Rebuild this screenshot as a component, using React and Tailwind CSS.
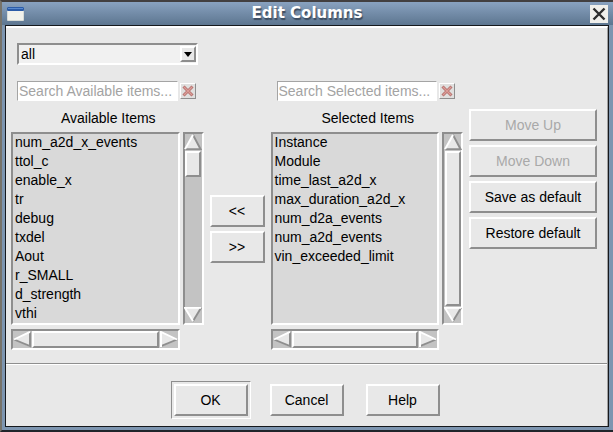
import React from "react";

const raised =
  "border-2 border-t-white border-l-white border-r-[#8e8e8e] border-b-[#8e8e8e] bg-[#e8e8e8]";
const sunken =
  "border-2 border-t-[#8e8e8e] border-l-[#8e8e8e] border-r-white border-b-white";

const available = [
  "num_a2d_x_events",
  "ttol_c",
  "enable_x",
  "tr",
  "debug",
  "txdel",
  "Aout",
  "r_SMALL",
  "d_strength",
  "vthi",
];

const selected = [
  "Instance",
  "Module",
  "time_last_a2d_x",
  "max_duration_a2d_x",
  "num_d2a_events",
  "num_a2d_events",
  "vin_exceeded_limit",
];

function Button({ children, className = "", disabled = false }) {
  return (
    <button
      type="button"
      disabled={disabled}
      className={`h-8 whitespace-nowrap disabled:text-[#a9a9a9] ${raised} ${className}`}
    >
      {children}
    </button>
  );
}

const arrows = {
  up: {
    face: "9,1 17,16 1,16",
    light: "M1 16 L9 1",
    dark: "M9 1 L16.5 16 H1",
  },
  down: {
    face: "1,1 17,1 9,16",
    light: "M17 2 H1 L9 16",
    dark: "M9 16 L17 2",
  },
  left: {
    face: "1,9 17,1 17,17",
    light: "M1 9 L17 1",
    dark: "M17 1 V16 L1 9",
  },
  right: {
    face: "1,1 17,9 1,17",
    light: "M1 17 V1 L17 9",
    dark: "M1 16 L17 9",
  },
};

function Arrow({ direction }) {
  const a = arrows[direction];
  return (
    <button type="button" aria-label={`Scroll ${direction}`} className="block shrink-0">
      <svg width="18" height="17" viewBox="0 0 18 18" preserveAspectRatio="none" className="block">
        <polygon points={a.face} fill="#e8e8e8" />
        <path d={a.dark} fill="none" stroke="#8e8e8e" strokeWidth="2" />
        <path d={a.light} fill="none" stroke="#fff" strokeWidth="2" />
      </svg>
    </button>
  );
}

function VerticalScrollbar({ full }) {
  return (
    <div className={`flex w-[21px] shrink-0 flex-col items-center bg-[#c3c3c3] ${sunken}`}>
      <Arrow direction="up" />
      <div className={`w-4 ${full ? "flex-1" : "h-[26px]"} ${raised}`} />
      {!full && <div className="flex-1" />}
      <Arrow direction="down" />
    </div>
  );
}

function HorizontalScrollbar() {
  return (
    <div className={`flex h-[21px] min-w-0 flex-1 items-center bg-[#c3c3c3] ${sunken}`}>
      <Arrow direction="left" />
      <div className={`mx-px h-[17px] flex-1 ${raised}`} />
      <Arrow direction="right" />
    </div>
  );
}

function ItemList({ label, placeholder, items, full }) {
  return (
    <section className="min-w-0 flex-1">
      <div className="flex items-center gap-0.5 pr-2 pl-[6px]">
        <input
          type="text"
          aria-label={placeholder}
          placeholder={placeholder}
          className="h-5 min-w-0 flex-1 border border-t-[#a4a4a4] border-l-[#a4a4a4] border-r-white border-b-white bg-white px-px outline-none placeholder:text-[#a3a3a3]"
        />
        <button
          type="button"
          aria-label="Clear search"
          className="flex size-4 items-center justify-center border border-t-white border-l-white border-r-[#8e8e8e] border-b-[#8e8e8e] bg-[#e0dfde]"
        >
          <svg width="12" height="12" viewBox="0 0 12 12">
            <path d="M1.5 1.5 L10.5 10.5 M10.5 1.5 L1.5 10.5" stroke="#b5716e" strokeWidth="3" />
            <path d="M2 2 L10 10 M10 2 L2 10" stroke="#dc9c97" strokeWidth="1.2" />
          </svg>
        </button>
      </div>
      <h2 className="mt-2 mb-[5px] pl-0.5 text-center leading-[18px]">{label}</h2>
      <div className="flex gap-[3px]">
        <ul
          role="listbox"
          aria-label={label}
          className={`h-[193px] min-w-0 flex-1 overflow-hidden bg-[#d9d9d9] px-0.5 ${sunken}`}
        >
          {items.map((item) => (
            <li key={item} role="option" aria-selected="false" className="h-[19px] leading-4">
              {item}
            </li>
          ))}
        </ul>
        <VerticalScrollbar full={full} />
      </div>
      <div className="mt-1 flex pr-6">
        <HorizontalScrollbar />
      </div>
    </section>
  );
}

export default function App() {
  return (
    <div className="border-t-2 border-b-2 border-l-2 border-t-[#423f40] border-b-[#20252b] border-l-[#77736a] font-['Liberation_Sans',Arial,sans-serif] text-sm text-black">
      <div className="bg-[#7d95b0]">
        <header className="flex h-[23px] items-center bg-linear-to-b from-[#89a2c0] to-[#5d7690] pr-[5px] pl-[5px]">
          <svg width="17" height="14" viewBox="0 0 17 14" className="shrink-0">
            <rect width="17" height="14" rx="1" fill="#d8dcd8" />
            <rect x="1" y="4" width="15" height="9" fill="#f2f2ec" />
            <rect width="17" height="4" rx="1" fill="#2c5ca8" />
            <rect x="1" y="1" width="15" height="1" fill="#5a8bd0" />
          </svg>
          <h1 className="flex-1 pb-px text-center font-['DejaVu_Sans',sans-serif] text-[15px] leading-5 font-bold text-white text-shadow-[1px_2px_1px_#3c4c60]">
            Edit Columns
          </h1>
          <button
            type="button"
            aria-label="Close"
            className="flex size-[18px] items-center justify-center bg-[#f0efeb]"
          >
            <svg width="14" height="14" viewBox="0 0 14 14">
              <path d="M1.5 1.5 L12.5 12.5 M12.5 1.5 L1.5 12.5" stroke="#2d2d2d" strokeWidth="2.4" />
            </svg>
          </button>
        </header>

        <div className="pr-1 pb-[3px] pl-[3px]">
          <main className="border border-[#16191d]">
            <div className="border-t-2 border-r border-t-white border-r-[#a0a0a0] bg-[#e8e8e8]">
              <div className="pt-[15px] pr-[10px] pb-[13px] pl-[5px]">
                <div className="relative ml-[6px] h-[22px] w-[181px] border-2 border-t-[#8e8e8e] border-r-white border-b-white border-l-[#8e8e8e] bg-[#f1f1f1]">
                  <select
                    aria-label="Filter"
                    defaultValue="all"
                    className="block h-full w-full appearance-none bg-transparent pl-0.5 leading-[18px] outline-none"
                  >
                    <option value="all">all</option>
                  </select>
                  <span
                    className={`pointer-events-none absolute top-px right-0 flex size-4 items-center justify-center ${raised}`}
                  >
                    <svg width="8" height="5" viewBox="0 0 8 5">
                      <polygon points="0,0 8,0 4,5" fill="#000" />
                    </svg>
                  </span>
                </div>

                <div className="mt-4 flex gap-[6px]">
                  <ItemList
                    label="Available Items"
                    placeholder="Search Available items..."
                    items={available}
                  />
                  <div className="flex w-[55px] shrink-0 flex-col gap-1 pt-[114px]">
                    <Button>&lt;&lt;</Button>
                    <Button>&gt;&gt;</Button>
                  </div>
                  <ItemList
                    label="Selected Items"
                    placeholder="Search Selected items..."
                    items={selected}
                    full
                  />
                  <div className="flex w-32 shrink-0 flex-col gap-1 pt-7">
                    <Button disabled>Move Up</Button>
                    <Button disabled>Move Down</Button>
                    <Button>Save as default</Button>
                    <Button>Restore default</Button>
                  </div>
                </div>
              </div>

              <footer className="border-t border-[#8e8e8e]">
                <div className="flex items-center justify-center gap-[19px] border-t border-white pt-4 pr-[3px] pb-[7px]">
                  <div className="border border-t-[#8e8e8e] border-r-white border-b-white border-l-[#8e8e8e] p-0.5">
                    <Button className="w-[74px]">OK</Button>
                  </div>
                  <div className="flex gap-[22px]">
                    <Button className="w-[74px]">Cancel</Button>
                    <Button className="w-[74px]">Help</Button>
                  </div>
                </div>
              </footer>
            </div>
          </main>
        </div>
      </div>
    </div>
  );
}
